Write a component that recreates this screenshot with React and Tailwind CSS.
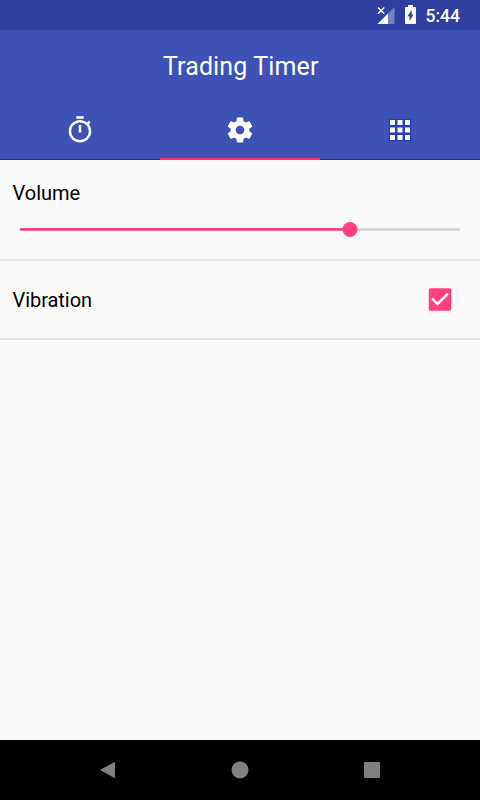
import React from 'react';

function TimerIcon() {
  return (
    <svg viewBox="0 0 24 24" className="size-[30px]" fill="currentColor">
      <path d="M15 1H9v2h6V1zm-4 13h2V8h-2v6zm8.03-6.61l1.42-1.42c-.43-.51-.9-.99-1.41-1.41l-1.42 1.42C16.07 4.74 14.12 4 12 4c-4.97 0-9 4.03-9 9s4.02 9 9 9 9-4.03 9-9c0-2.12-.74-4.07-1.97-5.61zM12 20c-3.87 0-7-3.13-7-7s3.13-7 7-7 7 3.13 7 7-3.13 7-7 7z" />
    </svg>
  );
}

function SettingsIcon() {
  return (
    <svg viewBox="0 0 24 24" className="size-[30px]" fill="currentColor">
      <path d="M19.43 12.98c.04-.32.07-.64.07-.98s-.03-.66-.07-.98l2.11-1.65c.19-.15.24-.42.12-.64l-2-3.46c-.12-.22-.39-.3-.61-.22l-2.49 1c-.52-.4-1.08-.73-1.69-.98l-.38-2.65C14.46 2.18 14.25 2 14 2h-4c-.25 0-.46.18-.49.42l-.38 2.65c-.61.25-1.17.59-1.69.98l-2.49-1c-.23-.09-.49 0-.61.22l-2 3.46c-.13.22-.07.49.12.64l2.11 1.65c-.04.32-.07.65-.07.98s.03.66.07.98l-2.11 1.65c-.19.15-.24.42-.12.64l2 3.46c.12.22.39.3.61.22l2.49-1c.52.4 1.08.73 1.69.98l.38 2.65c.03.24.24.42.49.42h4c.25 0 .46-.18.49-.42l.38-2.65c.61-.25 1.17-.59 1.69-.98l2.49 1c.23.09.49 0 .61-.22l2-3.46c.12-.22.07-.49-.12-.64l-2.11-1.65zM12 15.5c-1.93 0-3.5-1.57-3.5-3.5s1.57-3.5 3.5-3.5 3.5 1.57 3.5 3.5-1.57 3.5-3.5 3.5z" />
    </svg>
  );
}

function AppsIcon() {
  return (
    <svg viewBox="0 0 30 30" className="size-[30px]">
      <path fill="#2a3fb0" d="M4 4h22v22H4z" />
      <path fill="#fff" d="M5 5h5v5H5zM12.500 5h5v5h-5zM20 5h5v5h-5zM5 12.500h5v5H5zM12.500 12.500h5v5h-5zM20 12.500h5v5h-5zM5 20h5v5H5zM12.500 20h5v5h-5zM20 20h5v5h-5z" />
    </svg>
  );
}

function StatusBar() {
  return (
    <div className="flex h-[30px] items-center justify-end bg-[#303f9f] pr-5 text-white">
      <svg viewBox="0 0 18 20" className="mr-[10px] h-5 w-[18px]">
        <path fill="#7780bf" d="M17.500 2v17H.5z" />
        <path fill="#fff" d="M11 8.500V19H.5z" />
        <path fill="#303f9f" d="M0 0h8.500v9L7 10.500H0z" />
        <path stroke="#fff" strokeWidth="1.500" fill="none" d="M1 2.500l6.300 6.300M7.300 2.500L1 8.800" />
      </svg>
      <svg viewBox="0 0 11 19" className="mr-[10px] mb-[1px] h-[19px] w-[11px]">
        <path fill="#fff" d="M3 0h5v2h2a1 1 0 0 1 1 1v15a1 1 0 0 1-1 1H1a1 1 0 0 1-1-1V3a1 1 0 0 1 1-1h2z" />
        <path fill="#303f9f" d="M6.700 4.800v4.600h1.900L4.500 16v-4.700H2.500z" />
      </svg>
      <span className="pt-[3px] text-[17.500px] leading-none font-medium">5:44</span>
    </div>
  );
}

function Tab({ active, children }) {
  return (
    <button className="flex flex-1 flex-col items-center">
      <span className={active ? 'flex h-[57.5px] items-center pt-[2px]' : 'flex h-[58px] items-center pt-[1px]'}>{children}</span>
      <span className={active ? 'h-[2.5px] w-full bg-[#ff2d76]' : 'mt-[1px] h-[1px] w-full bg-[#0f2ba8]'} />
    </button>
  );
}

export default function App() {
  return (
    <div className="flex h-[800px] w-[480px] flex-col overflow-hidden bg-[#fafafa] font-['Roboto',sans-serif] text-black">
      <StatusBar />
      <header className="bg-[#3f51b5] text-white">
        <h1 className="flex h-[70px] items-center justify-center pt-[3px] pl-[1.5px] text-[25px] leading-none font-normal tracking-[0.13px]">
          Trading Timer
        </h1>
        <nav className="flex h-[60px]">
          <Tab><TimerIcon /></Tab>
          <Tab active><SettingsIcon /></Tab>
          <Tab><AppsIcon /></Tab>
        </nav>
      </header>
      <main className="flex-1">
        <section className="h-[101px] border-b-2 border-[#e4e4e4] px-[12.500px] pt-[21px]">
          <h2 className="text-[20px] leading-6 font-normal">Volume</h2>
          <div className="mt-4 flex h-4 items-center px-[7.500px]">
            <svg viewBox="0 0 440 16" className="h-4 w-[440px]">
              <path fill="#ff74a3" d="M0 7h330v3H0z" />
              <path fill="#ff2d72" d="M0 7.500h330v1.500H0z" />
              <path fill="#d8d8d8" d="M330 7h110v3H330z" />
              <circle cx="330" cy="8.500" r="7.500" fill="#ff4081" />
            </svg>
          </div>
        </section>
        <section className="flex h-[79px] items-center justify-between border-b-2 border-[#e0e0e0] pr-[25px] pl-[12.500px]">
          <span className="pt-[1px] text-[20px] leading-6 tracking-[-0.05px]">Vibration</span>
          <svg viewBox="0 0 30 30" className="size-[30px]">
            <rect x="3.750" y="3.300" width="22.500" height="22.500" rx="1.900" fill="#ff4081" />
            <path fill="#fff" d="M12.500 20.800l-6.250-6.250 1.760-1.760 4.490 4.470 9.490-9.490 1.760 1.780z" />
          </svg>
        </section>
      </main>
      <footer className="flex h-[60px] items-center justify-between bg-black px-[100px]">
        <svg viewBox="0 0 16 18" className="h-[18px] w-4">
          <path fill="#808080" stroke="#808080" strokeLinejoin="round" d="M.8 9L14.500 1.500v15z" />
        </svg>
        <svg viewBox="0 0 18 18" className="size-[18px]">
          <circle cx="9" cy="9" r="8.500" fill="#808080" />
        </svg>
        <div className="size-4 rounded-[1px] bg-[#808080]" />
      </footer>
    </div>
  );
}
